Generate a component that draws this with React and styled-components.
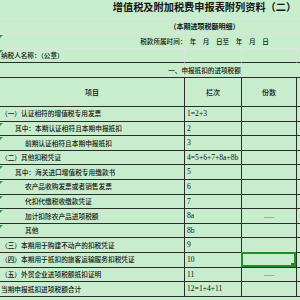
import React from 'react';
import styled, { createGlobalStyle } from 'styled-components';

const GRID = '#dbe5dc';
const LINE = '#2c2c2c';
const PICK = '#1f8f24';

const GlobalStyle = createGlobalStyle`
  html, body {
    margin: 0;
    padding: 0;
    background: #c7edcc;
  }
  body {
    font-family: "Noto Sans CJK SC", "Liberation Serif", serif;
    color: #141414;
  }
`;

// the window only shows part of the sheet
const Viewport = styled.div`
  width: 300px;
  height: 300px;
  overflow: hidden;
`;

const Sheet = styled.div`
  width: 409px;
  display: grid;
  grid-template-columns: 185px 57px 55px 1fr;
  grid-template-rows: 19px 15px 15px 14px 15px 29px repeat(13, 14.6px);
`;

const Base = styled.div`
  position: relative;
  box-sizing: border-box;
  display: flex;
  align-items: center;
  white-space: nowrap;
  font-size: 6.7px;
  font-weight: 500;
  line-height: 1;
`;

const Title = styled(Base)`
  grid-column: 1 / -1;
  justify-content: center;
  align-items: flex-start;
  padding-top: 2px;
  font-size: 10.2px;
  font-weight: 700;
  border-bottom: 1px solid ${GRID};
`;

const Banner = styled(Base)`
  grid-column: 1 / -1;
  justify-content: center;
  font-size: ${p => p.$size || 6.6}px;
  font-weight: ${p => (p.$bold ? 700 : 500)};
  white-space: pre;
  border-bottom: 1px solid ${p => (p.$dark ? LINE : GRID)};
`;

const InfoCell = styled(Base)`
  padding-left: 1px;
  font-size: 6.6px;
  border-bottom: 1px solid ${LINE};
  border-right: 1px solid ${GRID};
`;

const HeadCell = styled(Base)`
  justify-content: center;
  font-size: 7px;
  border-bottom: 1px solid ${LINE};
  border-right: ${p => (p.$open ? 'none' : `1px solid ${LINE}`)};
`;

const ItemCell = styled(Base)`
  padding-left: ${p => [1, 15, 25][p.$level || 0]}px;
  border-bottom: 1px solid ${LINE};
  border-right: 1px solid ${LINE};
`;

const CodeCell = styled(Base)`
  padding-left: 2px;
  font-family: "Liberation Serif", serif;
  font-size: 7.6px;
  border-bottom: 1px solid ${LINE};
  border-right: 1px solid ${LINE};
`;

const CountCell = styled(Base)`
  justify-content: center;
  color: #7c7c7c;
  font-weight: 400;
  border-bottom: 1px solid ${LINE};
  border-right: 1px solid ${LINE};
`;

const EdgeCell = styled(Base)`
  border-bottom: 1px solid ${LINE};
`;

// excel "number stored as text" marker
const Flag = styled.span`
  position: absolute;
  top: 1px;
  left: 0;
  width: 0;
  height: 0;
  border-top: 3px solid #2f9d32;
  border-right: 3px solid transparent;
`;

const Selection = styled.span`
  position: absolute;
  top: -1px;
  left: -1px;
  right: 0;
  bottom: 0;
  border: 2px solid ${PICK};
  pointer-events: none;
`;

const Handle = styled.span`
  position: absolute;
  right: -1px;
  bottom: -2px;
  width: 4px;
  height: 4px;
  background: ${PICK};
`;

const rows = [
  { label: '（一）认证相符的增值税专用发票', code: '1=2+3' },
  { label: '其中：本期认证相符且本期申报抵扣', code: '2', level: 1, flag: true },
  { label: '前期认证相符且本期申报抵扣', code: '3', level: 2, flag: true },
  { label: '（二）其他扣税凭证', code: '4=5+6+7+8a+8b' },
  { label: '其中：海关进口增值税专用缴款书', code: '5', level: 1, flag: true },
  { label: '农产品收购发票或者销售发票', code: '6', level: 2, flag: true },
  { label: '代扣代缴税收缴款凭证', code: '7', level: 2, flag: true },
  { label: '加计扣除农产品进项税额', code: '8a', level: 2, flag: true, dash: true },
  { label: '其他', code: '8b', level: 2, flag: true },
  { label: '（三）本期用于购建不动产的扣税凭证', code: '9' },
  { label: '（四）本期用于抵扣的旅客运输服务扣税凭证', code: '10', selected: true },
  { label: '（五）外贸企业进项税额抵扣证明', code: '11', dash: true },
  { label: '当期申报抵扣进项税额合计', code: '12=1+4+11' },
];

export default function App() {
  return (
    <>
      <GlobalStyle />
      <Viewport>
        <Sheet>
          <Title>增值税及附加税费申报表附列资料（二）</Title>
          <Banner $bold $size={7}>（本期进项税额明细）</Banner>
          <Banner>
            <Flag />
            税款所属时间：　年　月　日至　年　月　日
          </Banner>

          <InfoCell>
            <Flag />
            纳税人名称：（公章）
          </InfoCell>
          <InfoCell />
          <InfoCell />
          <EdgeCell />

          <Banner $dark>一、申报抵扣的进项税额</Banner>

          <HeadCell>项目</HeadCell>
          <HeadCell>栏次</HeadCell>
          <HeadCell>份数</HeadCell>
          <HeadCell $open />

          {rows.map(row => (
            <React.Fragment key={row.code}>
              <ItemCell $level={row.level}>
                {row.flag && <Flag />}
                {row.label}
              </ItemCell>
              <CodeCell>{row.code}</CodeCell>
              <CountCell>
                {row.dash && '——'}
                {row.selected && (
                  <Selection>
                    <Handle />
                  </Selection>
                )}
              </CountCell>
              <EdgeCell />
            </React.Fragment>
          ))}
        </Sheet>
      </Viewport>
    </>
  );
}
